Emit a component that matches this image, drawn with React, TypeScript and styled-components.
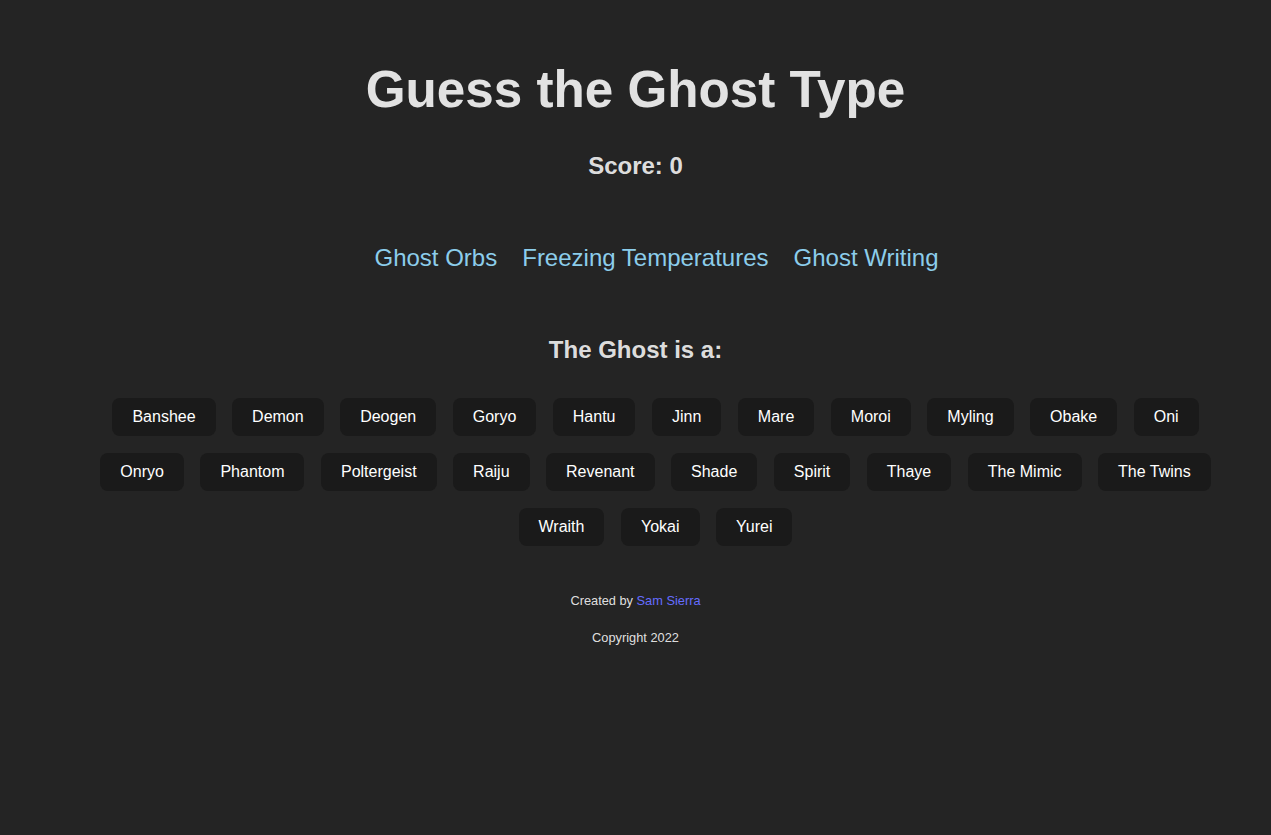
import React from 'react';
import styled, { createGlobalStyle } from 'styled-components';

const GlobalStyle = createGlobalStyle`
    body {
        margin: 0;
        background: #242424;
        color: rgba(255, 255, 255, 0.87);
        font-family: "Liberation Sans", Arial, sans-serif;
    }
`

const Page = styled.div`
    min-height: 835px;
    display: flex;
    flex-direction: column;
    align-items: center;
    text-align: center;
    padding-top: 62px;
    box-sizing: border-box;
`

const Title = styled.h1`
    margin: 0;
    font-size: 51.2px;
    line-height: 56px;
    font-weight: bold;
`

const Score = styled.h2`
    margin: 34px 0 0;
    font-size: 24px;
    line-height: 28px;
    font-weight: bold;
`

const Evidence = styled.ul`
    display: flex;
    gap: 25px;
    list-style: none;
    margin: 64px 0 0;
    padding: 0 0 0 42px;
`

const EvidenceItem = styled.li`
    font-size: 24px;
    line-height: 28px;
    color: #8ccdeb;
`

const Question = styled.h3`
    margin: 64px 0 0;
    font-size: 24px;
    line-height: 28px;
    font-weight: bold;
`

const Choices = styled.ul`
    display: flex;
    flex-wrap: wrap;
    justify-content: center;
    gap: 17px 16.5px;
    max-width: 1165px;
    list-style: none;
    margin: 34px 0 0;
    padding: 0 0 0 40px;
`

const GhostButton = styled.button`
    background: #1a1a1a;
    color: #ffffff;
    border: 0;
    border-radius: 8px;
    padding: 0 20px;
    height: 38px;
    font-family: "Liberation Sans", Arial, sans-serif;
    font-size: 16px;
    cursor: pointer;
`

const Footer = styled.footer`
    margin-top: 47px;
    font-size: 12.8px;
    line-height: 15px;
    display: flex;
    flex-direction: column;
    gap: 22px;
`

const Link = styled.a`
    color: #646cff;
    text-decoration: none;
`

const ghosts = [
    'Banshee', 'Demon', 'Deogen', 'Goryo', 'Hantu', 'Jinn', 'Mare', 'Moroi', 'Myling', 'Obake', 'Oni',
    'Onryo', 'Phantom', 'Poltergeist', 'Raiju', 'Revenant', 'Shade', 'Spirit', 'Thaye', 'The Mimic', 'The Twins',
    'Wraith', 'Yokai', 'Yurei',
]

const evidence = ['Ghost Orbs', 'Freezing Temperatures', 'Ghost Writing']

const App = () => {
    return (
        <Page>
            <GlobalStyle />
            <Title>Guess the Ghost Type</Title>
            <Score>Score: 0</Score>
            <Evidence>
                {evidence.map((e) => <EvidenceItem key={e}>{e}</EvidenceItem>)}
            </Evidence>
            <Question>The Ghost is a:</Question>
            <Choices>
                {ghosts.map((g) => <li key={g}><GhostButton>{g}</GhostButton></li>)}
            </Choices>
            <Footer>
                <div>Created by <Link href="#">Sam Sierra</Link></div>
                <div>Copyright 2022</div>
            </Footer>
        </Page>
    );
};

export default App;
